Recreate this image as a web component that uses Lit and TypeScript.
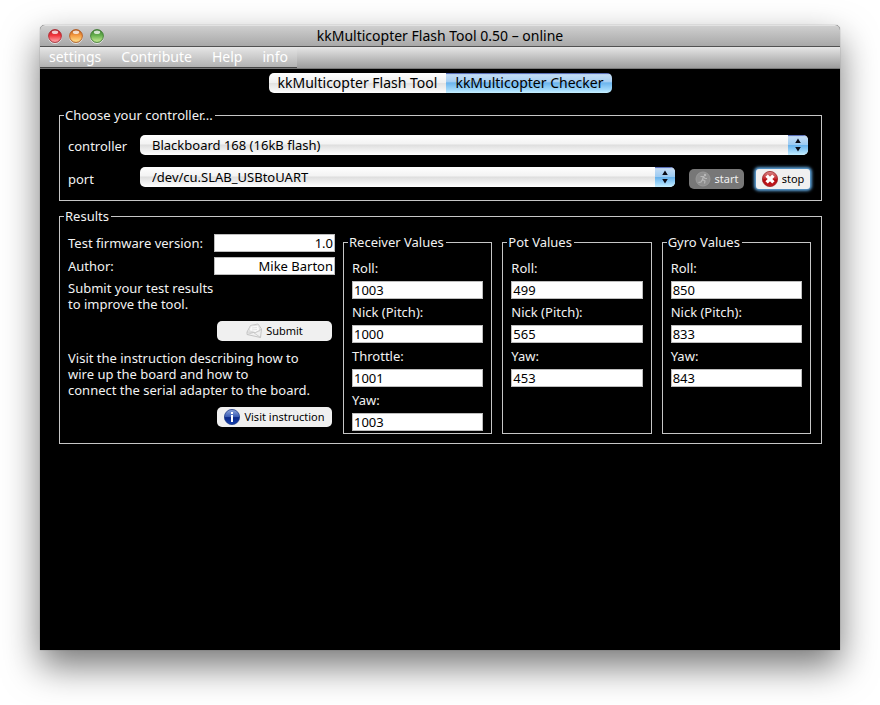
import { LitElement, html, css } from "lit";
import { customElement, state } from "lit/decorators.js";

interface ValueGroup {
  title: string;
  fields: [string, string][];
}

const MENUS = ["settings", "Contribute", "Help", "info"];
const TABS = ["kkMulticopter Flash Tool", "kkMulticopter Checker"];
const GROUPS: ValueGroup[] = [
  {
    title: "Receiver Values",
    fields: [["Roll:", "1003"], ["Nick (Pitch):", "1000"], ["Throttle:", "1001"], ["Yaw:", "1003"]],
  },
  {
    title: "Pot Values",
    fields: [["Roll:", "499"], ["Nick (Pitch):", "565"], ["Yaw:", "453"]],
  },
  {
    title: "Gyro Values",
    fields: [["Roll:", "850"], ["Nick (Pitch):", "833"], ["Yaw:", "843"]],
  },
];

const runIcon = html`<svg width="16" height="16" viewBox="0 0 16 16" aria-hidden="true">
  <circle cx="8" cy="8" r="7" fill="#8f8f8f" stroke="#999" />
  <circle cx="10" cy="4" r="1.2" fill="#b8b8b8" />
  <path d="M5.5 5.5 8.5 5.5 7.5 8.5 10 10 9.5 12.5M7.5 8.5 6 11 3.5 11.5M8.5 5.5 10 7.5 12 7.5" fill="none" stroke="#b8b8b8" stroke-width="1.2" />
</svg>`;

const stopIcon = html`<svg width="16" height="16" viewBox="0 0 16 16" aria-hidden="true">
  <defs>
    <linearGradient id="stop-fill" x1="0" y1="0" x2="0" y2="1">
      <stop offset="0" stop-color="#d98a8a" />
      <stop offset=".5" stop-color="#c4262b" />
      <stop offset=".55" stop-color="#b00a10" />
      <stop offset="1" stop-color="#c41a20" />
    </linearGradient>
  </defs>
  <circle cx="8" cy="8" r="7.6" fill="url(#stop-fill)" stroke="#9c2024" stroke-width=".8" />
  <path d="M4.6 4.6 11.4 11.4M11.4 4.6 4.6 11.4" stroke="#fff" stroke-width="3.4" />
</svg>`;

const mailIcon = html`<svg width="16" height="16" viewBox="0 0 16 16" aria-hidden="true">
  <path d="M1 9 4.5 2.5 12 1 15.5 6 14.5 14.5 1 11.5Z" fill="#f0f0f0" stroke="#c0c0c0" stroke-width=".9" />
  <path d="M4.5 3 12.5 2 14 8 9 9.5 3 7.5Z" fill="#fafafa" stroke="#d4d4d4" stroke-width=".7" />
  <path d="M1 9 9.5 9.5 15 6.5M1 11.5 7.5 9.5 14.5 14.5" fill="none" stroke="#c4c4c4" stroke-width=".8" />
  <path d="M6 5 11 4.5M6 7 11 6.5" fill="none" stroke="#d8d8d8" stroke-width=".7" />
</svg>`;

const infoIcon = html`<svg width="16" height="16" viewBox="0 0 16 16" aria-hidden="true">
  <defs>
    <linearGradient id="info-fill" x1="0" y1="0" x2="0" y2="1">
      <stop offset="0" stop-color="#8ea6dc" />
      <stop offset=".48" stop-color="#3a5cb4" />
      <stop offset=".54" stop-color="#0a2888" />
      <stop offset="1" stop-color="#1440b0" />
    </linearGradient>
  </defs>
  <circle cx="8" cy="8" r="7.6" fill="url(#info-fill)" stroke="#1c3a88" stroke-width=".8" />
  <rect x="7" y="3" width="2" height="2" fill="#fff" />
  <path d="M7 6H9V13H7Z" fill="#fff" />
</svg>`;

const light = (id: string, rim: string, top: string, bottom: string) => html`
  <svg width="14" height="15" viewBox="0 0 14 15">
    <defs>
      <linearGradient id=${id} x1="0" y1="0" x2="0" y2="1">
        <stop offset="0" stop-color=${rim} />
        <stop offset=".45" stop-color=${top} />
        <stop offset="1" stop-color=${bottom} />
      </linearGradient>
    </defs>
    <circle cx="7" cy="8" r="6.5" fill="none" stroke="#e2e2e2" />
    <circle cx="7" cy="7" r="6.4" fill="url(#${id})" stroke=${rim} stroke-width=".9" />
    <ellipse cx="7" cy="3.2" rx="3.2" ry="1.8" fill="#fff" opacity=".75" />
  </svg>`;

const picker = (id: string, value: string) => html`
  <div class="picker">
    <select id=${id}><option>${value}</option></select>
    <svg class="arrows" viewBox="0 0 20 20" aria-hidden="true">
      <path d="M10 3.5 12.8 8H7.2ZM10 16.5 12.8 12H7.2Z" fill="#0a0a14" />
    </svg>
  </div>`;

@customElement("app-root")
class AppRoot extends LitElement {
  @state() private tab = 1;

  static styles = css`
    :host {
      display: flex;
      box-sizing: border-box;
      min-height: 100vh;
      padding: 25px 40px 55px;
      background: #fff;
      overflow: hidden;
      font: 13px/16px "Noto Sans", "Open Sans", sans-serif;
      color: #f2f2f2;
    }
    .window {
      flex: 1;
      min-width: 0;
      display: flex;
      flex-direction: column;
      background: #000;
      border-radius: 5px 5px 0 0;
      box-shadow: 0 0 1px rgba(0, 0, 0, 0.6), 0 16px 36px rgba(0, 0, 0, 0.54);
    }
    button {
      margin: 0;
      border: 0;
      padding: 0;
      font: inherit;
      color: inherit;
      background: none;
    }
    .titlebar {
      display: grid;
      grid-template-columns: 1fr auto 1fr;
      align-items: center;
      height: 22px;
      box-sizing: border-box;
      padding: 0 8px;
      border-top: 1px solid #e2e2e2;
      border-bottom: 1px solid #515151;
      border-radius: 5px 5px 0 0;
      background: linear-gradient(#cfcfcf, #a8a8a8);
      color: #000;
    }
    .lights {
      display: flex;
      gap: 7px;
    }
    .lights button {
      width: 14px;
      height: 15px;
    }
    .lights svg,
    .push svg {
      display: block;
      flex: none;
    }
    .title {
      margin: 0;
      font-size: 14px;
      font-weight: 400;
      line-height: 20px;
    }
    .menubar {
      display: flex;
      height: 22px;
      box-sizing: border-box;
      border-bottom: 1px solid #777;
      background: linear-gradient(#e6e6e6, #9c9c9c);
    }
    .menus {
      display: flex;
      gap: 20px;
      padding: 0 9px;
      border-bottom: 1px solid #444;
      background: linear-gradient(#e6e6e6, #b2b2b2);
      font-size: 14px;
      line-height: 20px;
      color: #fff;
    }
    .content {
      padding: 4px 18px 20px 19px;
    }
    .tabs {
      display: flex;
      justify-content: center;
    }
    .tab {
      height: 20px;
      padding: 0 9px;
      background: linear-gradient(#fff, #f0f0f0 48%, #e2e2e2 52%, #f4f4f4 85%, #fff);
      color: #000;
      font-size: 14px;
      line-height: 20px;
    }
    .tab:first-child {
      border-radius: 5px 0 0 5px;
    }
    .tab:last-child {
      border-radius: 0 5px 5px 0;
    }
    .tab.active {
      background: linear-gradient(#2b3f9c, #c3dcf5 8%, #a9d0f3 42%, #6cb5ee 50%, #a4dafb 85%, #c8f0ff);
    }
    fieldset {
      margin: 0;
      min-width: 0;
      box-sizing: border-box;
      border: 1px solid #c6c6c6;
    }
    legend {
      margin: 0 0 0 -4px;
      padding: 0 2px 0 1px;
    }
    .chooser {
      margin-top: 14px;
      padding: 12px 10px 11px 8px;
    }
    .line {
      display: flex;
      align-items: flex-start;
    }
    .line label {
      flex: none;
      width: 72px;
      padding-top: 3px;
    }
    .first {
      padding-right: 3px;
      margin-bottom: 12px;
    }
    .second label {
      padding-top: 4px;
    }
    .picker {
      flex: 1;
      position: relative;
      height: 20px;
    }
    select {
      appearance: none;
      display: block;
      box-sizing: border-box;
      width: 100%;
      height: 20px;
      margin: 0;
      padding: 0 24px 0 12px;
      border: 0;
      border-radius: 5px;
      background: linear-gradient(#fff, #f3f3f3 45%, #dedede 50%, #f6f6f6 85%, #fff);
      color: #000;
      font: inherit;
      line-height: 20px;
    }
    .arrows {
      position: absolute;
      top: 0;
      right: 0;
      width: 20px;
      height: 20px;
      border-radius: 0 5px 5px 0;
      background: linear-gradient(#2b3f9c, #c3dcf5 8%, #9dcbf2 48%, #68b2ec 52%, #a4dafb 85%, #c8f0ff);
      pointer-events: none;
    }
    .actions {
      display: flex;
      gap: 12px;
      padding: 2px 1px 0 14px;
    }
    .push {
      display: flex;
      align-items: center;
      justify-content: center;
      gap: 4px;
      height: 20px;
      border-radius: 5px;
      background: #f0f0f0;
      color: #000;
      font-size: 11px;
      line-height: 20px;
    }
    .start {
      width: 55px;
      background: #777;
      color: #f0f0f0;
    }
    .stop {
      width: 54px;
      border-radius: 3px;
      box-shadow: 0 0 3px 2px #5ea4dc;
    }
    .results {
      display: grid;
      grid-template-columns: 267px 1fr;
      gap: 8px;
      margin-top: 7px;
      padding: 10px 10px 9px 8px;
    }
    .field {
      box-sizing: border-box;
      width: 100%;
      height: 18px;
      margin: 0;
      padding: 0 1px;
      border: 1px solid #bdbdbd;
      border-radius: 0;
      background: #fff;
      color: #000;
      font: inherit;
    }
    .meta {
      display: grid;
      grid-template-columns: 1fr 121px;
      row-gap: 5px;
      align-items: center;
    }
    .meta .field {
      text-align: right;
    }
    .note {
      margin: 5px 0 9px;
    }
    .wide {
      width: 115px;
      margin: 0 3px 0 auto;
    }
    .wide + .note {
      margin-top: 9px;
    }
    .groups {
      display: grid;
      grid-template-columns: repeat(3, 1fr);
      gap: 10px;
    }
    .group {
      padding: 10px 8px 2px;
    }
    .stack {
      display: grid;
      gap: 5px;
    }
  `;

  render() {
    return html`
      <main class="window">
        <header class="titlebar">
          <div class="lights">
            <button aria-label="Close">${light("red", "#a8242c", "#f2353c", "#ffb0b4")}</button>
            <button aria-label="Minimize">${light("amber", "#b0561c", "#f59a40", "#ffe794")}</button>
            <button aria-label="Zoom">${light("green", "#3c7a30", "#66b04e", "#cdf09a")}</button>
          </div>
          <h1 class="title">kkMulticopter Flash Tool 0.50 – online</h1>
        </header>
        <nav class="menubar">
          <div class="menus">${MENUS.map((m) => html`<button>${m}</button>`)}</div>
        </nav>
        <div class="content">
          <div class="tabs" role="tablist">
            ${TABS.map(
              (t, i) => html`<button
                class="tab ${i === this.tab ? "active" : ""}"
                role="tab"
                aria-selected=${i === this.tab}
                @click=${() => (this.tab = i)}
              >${t}</button>`
            )}
          </div>

          <fieldset class="chooser">
            <legend>Choose your controller...</legend>
            <div class="line first">
              <label for="controller">controller</label>
              ${picker("controller", "Blackboard 168 (16kB flash)")}
            </div>
            <div class="line second">
              <label for="port">port</label>
              ${picker("port", "/dev/cu.SLAB_USBtoUART")}
              <div class="actions">
                <button class="push start" disabled>${runIcon}start</button>
                <button class="push stop">${stopIcon}stop</button>
              </div>
            </div>
          </fieldset>

          <fieldset class="results">
            <legend>Results</legend>
            <div>
              <div class="meta">
                <label for="version">Test firmware version:</label>
                <input class="field" id="version" .value=${"1.0"} />
                <label for="author">Author:</label>
                <input class="field" id="author" .value=${"Mike Barton"} />
              </div>
              <p class="note">Submit your test results<br />to improve the tool.</p>
              <button class="push wide">${mailIcon}Submit</button>
              <p class="note">
                Visit the instruction describing how to<br />wire up the board and how to<br />connect the serial
                adapter to the board.
              </p>
              <button class="push wide">${infoIcon}Visit instruction</button>
            </div>
            <div class="groups">
              ${GROUPS.map(
                (g, gi) => html`<fieldset class="group">
                  <legend>${g.title}</legend>
                  <div class="stack">
                    ${g.fields.map(
                      ([name, value], i) => html`
                        <label for="v${gi}-${i}">${name}</label>
                        <input class="field" id="v${gi}-${i}" .value=${value} />
                      `
                    )}
                  </div>
                </fieldset>`
              )}
            </div>
          </fieldset>
        </div>
      </main>
    `;
  }
}
